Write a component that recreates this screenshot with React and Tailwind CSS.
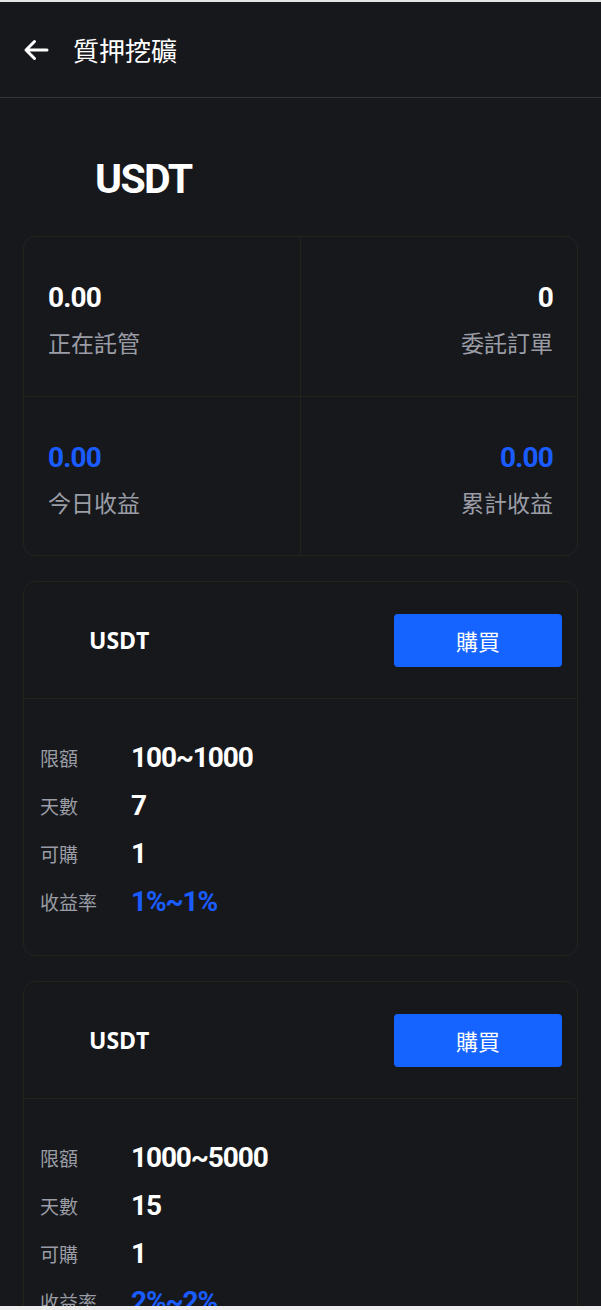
import React from "react";

const cjk = { fontFamily: '"Noto Sans CJK TC", "Noto Sans", sans-serif' };
const num = { fontFamily: 'Roboto, "Noto Sans", sans-serif' };

function Arrow() {
  return (
    <svg width="26" height="22" viewBox="0 0 26 22" fill="none">
      <path d="M24 11H3M11.5 2.5L3 11l8.5 8.5" stroke="#ffffff" strokeWidth="3" strokeLinecap="round" strokeLinejoin="round" />
    </svg>
  );
}

function Stat({ value, label, blue, right, short }) {
  return (
    <div className={`${short ? "h-[158px]" : "h-[159px]"} pt-[45px] px-[24px] flex flex-col ${right ? "items-end" : "items-start"}`}>
      <div className={`text-[28px] leading-[32px] font-bold tracking-[-0.03em] ${blue ? "text-[#1a5cff]" : "text-white"}`} style={num}>
        {value}
      </div>
      <div className="mt-[13px] text-[23px] leading-[30px] text-[#9a9da5]" style={cjk}>
        {label}
      </div>
    </div>
  );
}

function Row({ label, value, blue }) {
  return (
    <div className="flex items-center h-[48px]">
      <div className="w-[91px] text-[19px] text-[#9a9da5]" style={cjk}>{label}</div>
      <div className={`text-[28px] leading-[32px] font-bold tracking-[-0.04em] ${blue ? "text-[#1a5cff]" : "text-white"}`} style={num}>
        {value}
      </div>
    </div>
  );
}

function Product({ limit, days, avail, rate }) {
  return (
    <div className="mx-[23px] rounded-[12px] border border-[#22241c] bg-[#17181c]">
      <div className="h-[117px] flex items-center justify-between pl-[65px] pr-[15px] border-b border-[#22241c]">
        <div className="text-[23px] font-bold text-white" style={{ fontFamily: '"Open Sans", "Noto Sans", sans-serif' }}>USDT</div>
        <button className="w-[168px] h-[53px] rounded-[4px] bg-[#1664ff] text-white text-[22px]" style={cjk}>
          購買
        </button>
      </div>
      <div className="pt-[35px] pb-[29px] pl-[16px]">
        <Row label="限額" value={limit} />
        <Row label="天數" value={days} />
        <Row label="可購" value={avail} />
        <Row label="收益率" value={rate} blue />
      </div>
    </div>
  );
}

export default function App() {
  return (
    <div className="min-h-screen bg-[#17181c] border-t-2 border-[#e6e6e6] pb-[40px]">
      <div className="h-[96px] flex items-center pl-[23px] border-b border-[#34363b]">
        <Arrow />
        <div className="ml-[24px] text-[26px] text-white" style={cjk}>質押挖礦</div>
      </div>
      <div className="pt-[57px] mb-[33px] pl-[95px] text-[41px] leading-[48px] font-bold tracking-[-0.04em] text-white" style={num}>
        USDT
      </div>
      <div className="mx-[23px] rounded-[12px] border border-[#22241c] grid grid-cols-2">
        <div className="border-r border-b border-[#22241c]"><Stat value="0.00" label="正在託管" /></div>
        <div className="border-b border-[#22241c]"><Stat value="0" label="委託訂單" right /></div>
        <div className="border-r border-[#22241c]"><Stat value="0.00" label="今日收益" blue short /></div>
        <div><Stat value="0.00" label="累計收益" blue right short /></div>
      </div>
      <div className="mt-[25px] flex flex-col gap-[25px]">
        <Product limit="100~1000" days="7" avail="1" rate="1%~1%" />
        <Product limit="1000~5000" days="15" avail="1" rate="2%~2%" />
        <Product limit="5000~10000" days="30" avail="1" rate="3%~3%" />
      </div>
      <div className="fixed left-0 right-0 bottom-0 h-[4px] bg-[#eeeeee]" />
    </div>
  );
}
